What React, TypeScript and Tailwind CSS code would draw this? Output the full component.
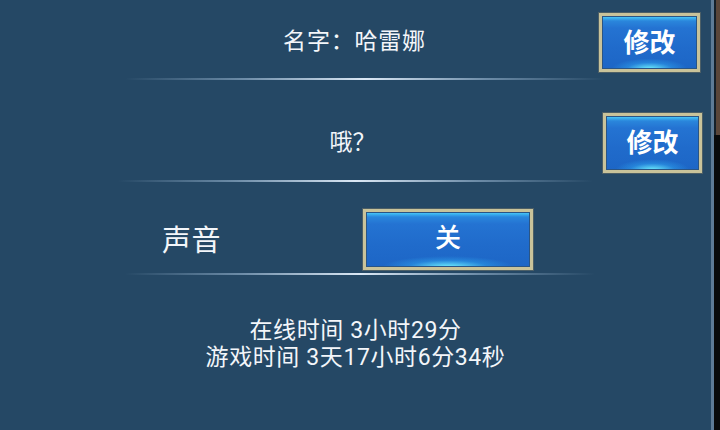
import React from "react";

function GlowButton({
  label,
  className,
  textClass,
}: {
  label: string;
  className: string;
  textClass: string;
}) {
  return (
    <div
      className={`${className} shrink-0 flex items-center justify-center border-[3px] border-[#c9c39a] shadow-[0_0_0_1px_#4d5f66,inset_0_0_0_1px_#2a5585] bg-[radial-gradient(ellipse_40%_20%_at_50%_100%,rgba(110,240,255,1),rgba(50,175,245,0.4)_60%,transparent),linear-gradient(to_bottom,#55d6ff_0px,#3db4f0_2px,#2a86dc_5px,#2473d2_12px,#206bcb_60%,#1d66c6)]`}
    >
      <span className={`${textClass} text-white leading-none`}>{label}</span>
    </div>
  );
}

function GlowLine({ className }: { className: string }) {
  return (
    <div
      className={`${className} h-[2px] bg-[linear-gradient(to_right,rgba(200,222,242,0),rgba(170,198,224,0.55)_25%,#dbe8f5_50%,rgba(170,198,224,0.55)_75%,rgba(200,222,242,0))]`}
    />
  );
}

export default function App() {
  return (
    <div className="flex w-[720px] h-[430px] overflow-hidden font-[Roboto,'Noto_Sans_CJK_SC',sans-serif]">
      <div className="w-[711px] h-full bg-[#254865] flex flex-col text-[#f3f6fa]">
        {/* name row */}
        <div className="mt-[13px] h-[59px] flex items-center pl-[110px] pr-[11px]">
          <div className="flex-1 text-center text-[23px] tracking-[0.8px]">名字：哈雷娜</div>
          <GlowButton label="修改" className="w-[101px] h-[59px]" textClass="text-[26px] font-bold" />
        </div>
        <GlowLine className="mt-[6px] ml-[125px] w-[480px]" />

        {/* signature row */}
        <div className="mt-[33px] h-[60px] flex items-center pl-[102px] pr-[9px]">
          <div className="flex-1 text-center text-[23px]">哦？</div>
          <GlowButton label="修改" className="w-[99px] h-[60px]" textClass="text-[26px] font-bold" />
        </div>
        <GlowLine className="mt-[7px] ml-[118px] w-[475px]" />

        {/* sound row */}
        <div className="mt-[27px] h-[61px] flex items-center pl-[162px]">
          <div className="w-[201px] text-[29px] pt-[5px] tracking-[0.5px]">声音</div>
          <GlowButton label="关" className="w-[170px] h-[61px]" textClass="text-[26px] font-medium -mt-[3px]" />
        </div>
        <GlowLine className="mt-[3px] ml-[125px] w-[470px]" />

        {/* play time */}
        <div className="mt-[42px] flex flex-col items-center text-[23px] leading-[27px] tracking-[0.6px]">
          <div>在线时间 3小时29分</div>
          <div>游戏时间 3天17小时6分34秒</div>
        </div>
      </div>

      {/* window edge */}
      <div className="w-[3px] h-full bg-[#5d7b97]" />
      <div className="w-[6px] h-full flex flex-col bg-[#080a0c]">
        <div className="h-[135px] flex">
          <div className="w-[2px] bg-[#14202a]" />
          <div className="flex-1 bg-[#5a463a]" />
        </div>
      </div>
    </div>
  );
}
